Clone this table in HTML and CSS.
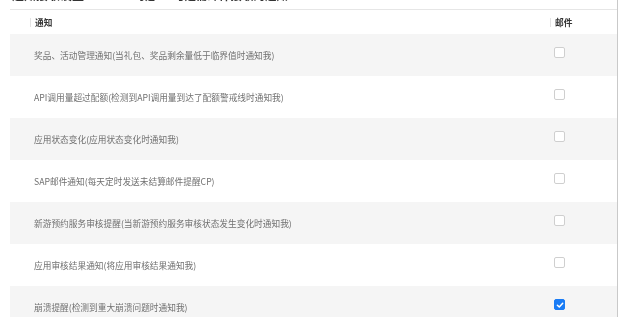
FILE: index.html
```html
<!DOCTYPE html>
<html lang="zh">
<head>
<meta charset="utf-8">
<link rel="stylesheet" href="styles.css">
</head>
<body>
<div class="page">
  <div class="title"><div class="title-text"><span class="t1">通知接收设置</span><span class="t2">可选</span><span class="t3">勾选需邮件接收的通知</span></div></div>
  <div class="table">
    <div class="row head">
      <div class="c-name"><span class="sep"></span>通知</div>
      <div class="c-mail"><span class="sep"></span>邮件</div>
    </div>
    <div class="row gray">
      <div class="c-name">奖品、活动管理通知(当礼包、奖品剩余量低于临界值时通知我)</div>
      <div class="c-mail"><span class="cb"></span></div>
    </div>
    <div class="row">
      <div class="c-name">API调用量超过配额(检测到API调用量到达了配额警戒线时通知我)</div>
      <div class="c-mail"><span class="cb"></span></div>
    </div>
    <div class="row gray">
      <div class="c-name">应用状态变化(应用状态变化时通知我)</div>
      <div class="c-mail"><span class="cb"></span></div>
    </div>
    <div class="row">
      <div class="c-name">SAP邮件通知(每天定时发送未结算邮件提醒CP)</div>
      <div class="c-mail"><span class="cb"></span></div>
    </div>
    <div class="row gray">
      <div class="c-name">新游预约服务审核提醒(当新游预约服务审核状态发生变化时通知我)</div>
      <div class="c-mail"><span class="cb"></span></div>
    </div>
    <div class="row">
      <div class="c-name">应用审核结果通知(将应用审核结果通知我)</div>
      <div class="c-mail"><span class="cb"></span></div>
    </div>
    <div class="row gray">
      <div class="c-name">崩溃提醒(检测到重大崩溃问题时通知我)</div>
      <div class="c-mail"><span class="cb checked"><svg viewBox="0 0 10 10" width="10" height="10"><path d="M2.4 5.2 L4.3 7 L7.7 3.3" fill="none" stroke="#fff" stroke-width="1.5" stroke-linecap="round" stroke-linejoin="round"/></svg></span></div>
    </div>
  </div>
</div>
</body>
</html>
```
FILE: styles.css
```css
html, body {
  margin: 0;
  padding: 0;
  background: #fff;
  overflow: hidden;
}
body {
  font-family: "Noto Sans CJK SC", "Liberation Sans", sans-serif;
  width: 619px;
  height: 317px;
}
.page {
  width: 618px;
  height: 317px;
  border-right: 1px solid #c9c9c9;
  box-sizing: border-box;
}
.title {
  height: 9px;
  overflow: hidden;
  padding-left: 12px;
}
.title-text {
  margin-top: -12px;
  font-size: 12px;
  line-height: 14px;
  font-weight: 700;
  color: #333;
  white-space: nowrap;
  filter: blur(0.4px);
}
.t2 { margin-left: 51px; font-size: 10px; }
.t3 { margin-left: 18px; font-size: 11.5px; }
.table {
  margin-left: 10px;
  border-top: 1px solid #e6e6e6;
}
.row {
  display: flex;
  align-items: center;
  height: 42px;
  font-size: 8.7px;
  color: #707070;
}
.row.head {
  height: 24px;
  font-weight: 700;
  color: #333;
}
.row.gray {
  background: #f5f5f5;
}
.c-name {
  flex: 1;
  display: flex;
  align-items: center;
  padding-left: 24px;
  white-space: nowrap;
}
.c-name, .c-mail {
  filter: blur(0.2px);
}
.c-mail {
  width: 67px;
  display: flex;
  align-items: center;
  padding-left: 4px;
  box-sizing: border-box;
}
.head .c-name { padding-left: 20px; }
.head .c-mail { padding-left: 0; }
.sep {
  display: inline-block;
  width: 1px;
  height: 9px;
  background: #e3e3e3;
  margin-right: 4px;
}
.cb {
  display: inline-block;
  width: 11px;
  height: 11px;
  border: 1px solid #cfcfcf;
  border-radius: 2px;
  box-sizing: border-box;
  background: #fff;
  margin-top: -5px;
}
.cb.checked {
  background: #1a7cf5;
  border-color: #1a7cf5;
}
.cb svg {
  display: block;
  margin: -0.5px 0 0 -0.5px;
}
```
